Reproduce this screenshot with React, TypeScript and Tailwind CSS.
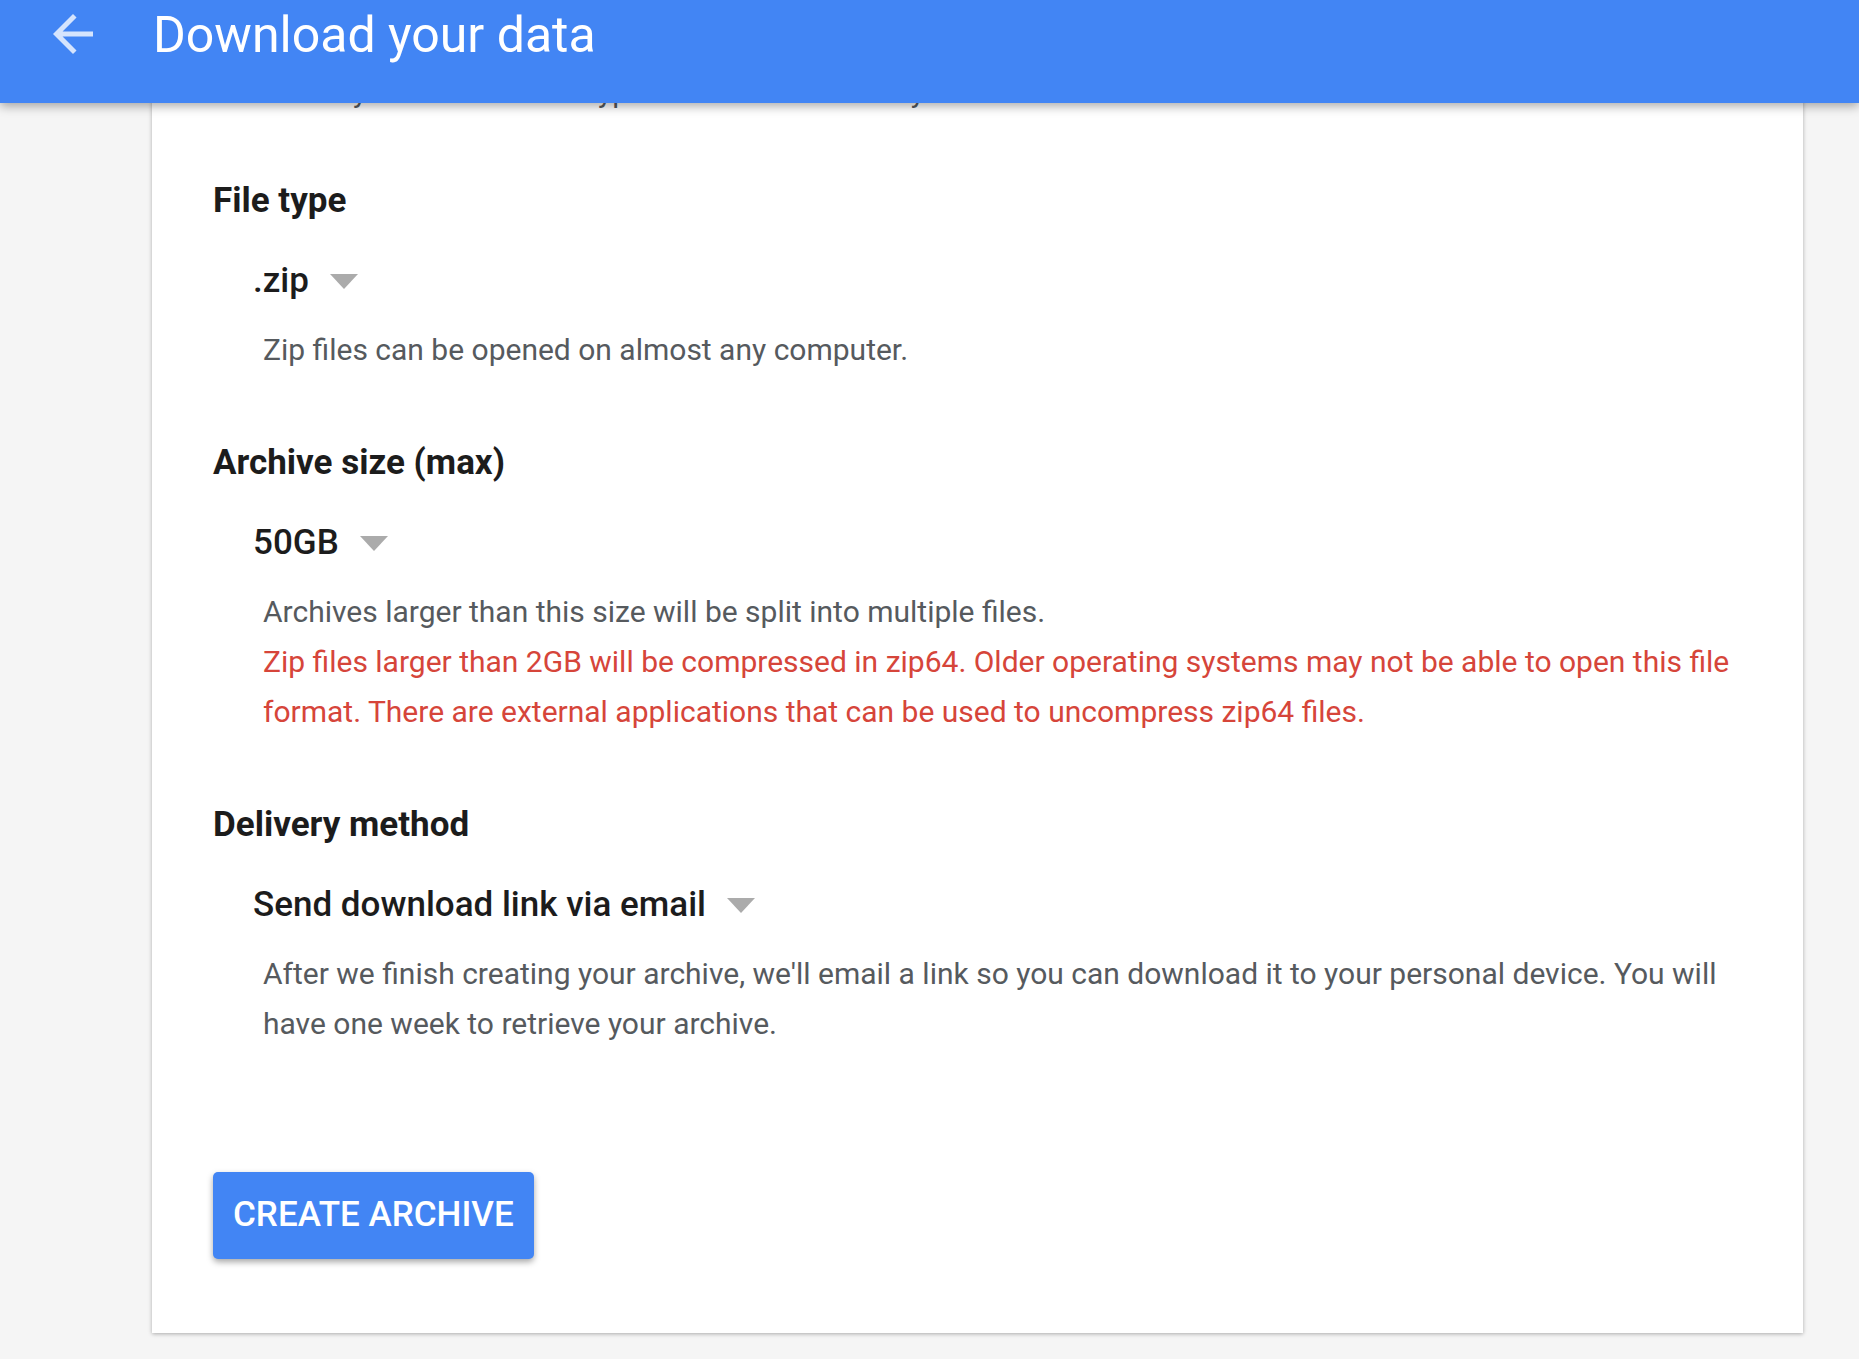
import React from "react";

function Caret() {
  return (
    <svg width="28" height="15" viewBox="0 0 28 15" className="ml-[21px] shrink-0">
      <polygon points="0,0 28,0 14,15" fill="#ababab" />
    </svg>
  );
}

function Section({
  title,
  value,
  children,
  first,
}: {
  title: string;
  value: string;
  children: React.ReactNode;
  first?: boolean;
}) {
  return (
    <section className={first ? "mt-[60px]" : "mt-[64px]"}>
      <h2 className="text-[35px] leading-[48px] font-bold text-[#1c1c1c]">{title}</h2>
      <div className="mt-[32px] pl-[40px] flex items-center">
        <span className="text-[35px] leading-[48px] font-medium text-[#1c1c1c]">{value}</span>
        <Caret />
      </div>
      <div className="mt-[20px] pl-[50px] text-[30px] leading-[50px] text-[#565a5e]">{children}</div>
    </section>
  );
}

export default function App() {
  return (
    <div className="min-h-[1359px] bg-[#f5f5f5] font-['Roboto',sans-serif] pl-[152px] pr-[56px] pb-[25px]">
      <header className="fixed top-0 left-0 right-0 h-[103px] bg-[#4285f4] z-10 shadow-[0_3px_10px_rgba(0,0,0,0.35)]">
        <svg
          width="60"
          height="60"
          viewBox="0 0 24 24"
          className="absolute left-[43px] top-[4px]"
        >
          <path
            d="M20 11H7.83l5.59-5.59L12 4l-8 8 8 8 1.41-1.41L7.83 13H20v-2z"
            fill="rgba(255,255,255,0.78)"
          />
        </svg>
        <h1 className="absolute left-[153px] top-[5px] text-[50px] leading-[60px] text-white font-normal">
          Download your data
        </h1>
      </header>
      <div className="bg-white shadow-[0_1px_4px_rgba(0,0,0,0.3)] pt-[67px] pb-[74px] pl-[61px] pr-[61px]">
        <p className="pl-[50px] text-[30px] leading-[50px] text-[#565a5e] whitespace-nowrap overflow-hidden">
          Select your archive's file type that works best for you.
        </p>
        <Section title="File type" value=".zip" first>
          Zip files can be opened on almost any computer.
        </Section>
        <Section title="Archive size (max)" value="50GB">
          <p>Archives larger than this size will be split into multiple files.</p>
          <p className="text-[#d6453a]">
            Zip files larger than 2GB will be compressed in zip64. Older operating systems may not be able to
            open this file format. There are external applications that can be used to uncompress zip64 files.
          </p>
        </Section>
        <Section title="Delivery method" value="Send download link via email">
          After we finish creating your archive, we'll email a link so you can download it to your personal
          device. You will have one week to retrieve your archive.
        </Section>
        <button className="mt-[123px] h-[87px] px-[20px] rounded-[5px] bg-[#4285f4] text-white text-[35px] font-medium uppercase shadow-[0_3px_6px_rgba(0,0,0,0.35)]">
          Create archive
        </button>
      </div>
    </div>
  );
}
